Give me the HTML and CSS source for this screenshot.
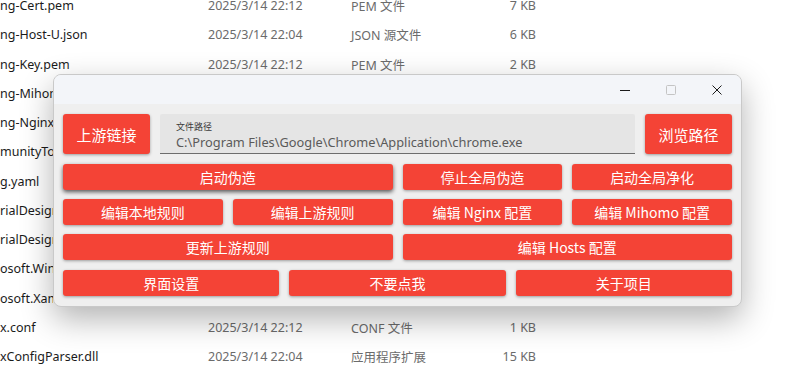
FILE: index.html
```html
<!DOCTYPE html>
<html lang="zh-CN">
<head>
    <meta charset="UTF-8">
    <meta name="viewport" content="width=device-width, initial-scale=1.0">
    <title>上游链接</title>
    <link rel="stylesheet" href="styles.css">
</head>
<body>
    <!-- file explorer list behind the dialog -->
    <div class="file-list">
        <div class="file-row"><span class="name">ng-Cert.pem</span><span class="date">2025/3/14 22:12</span><span class="type">PEM 文件</span><span class="size">7 KB</span></div>
        <div class="file-row"><span class="name">ng-Host-U.json</span><span class="date">2025/3/14 22:04</span><span class="type">JSON 源文件</span><span class="size">6 KB</span></div>
        <div class="file-row"><span class="name">ng-Key.pem</span><span class="date">2025/3/14 22:12</span><span class="type">PEM 文件</span><span class="size">2 KB</span></div>
        <div class="file-row hidden"><span class="name">ng-Mihomo.yaml</span></div>
        <div class="file-row hidden"><span class="name">ng-Nginx.conf</span></div>
        <div class="file-row hidden"><span class="name">munityToolkit.dll</span></div>
        <div class="file-row hidden"><span class="name">g.yaml</span></div>
        <div class="file-row hidden"><span class="name">rialDesignColors.dll</span></div>
        <div class="file-row hidden"><span class="name">rialDesignThemes.dll</span></div>
        <div class="file-row hidden"><span class="name">osoft.Windows.dll</span></div>
        <div class="file-row hidden"><span class="name">osoft.Xaml.dll</span></div>
        <div class="file-row"><span class="name">x.conf</span><span class="date">2025/3/14 22:12</span><span class="type">CONF 文件</span><span class="size">1 KB</span></div>
        <div class="file-row"><span class="name">xConfigParser.dll</span><span class="date">2025/3/14 22:04</span><span class="type">应用程序扩展</span><span class="size">15 KB</span></div>
    </div>

    <div class="window">
        <div class="title-bar">
            <span class="ctl">
                <svg width="10" height="10" viewBox="0 0 10 10"><path d="M0 5.5h10" stroke="#1a1a1a" stroke-width="1"/></svg>
            </span>
            <span class="ctl">
                <svg width="10" height="10" viewBox="0 0 10 10"><rect x="0.5" y="0.5" width="9" height="9" rx="1" fill="none" stroke="#c4c4c4" stroke-width="1"/></svg>
            </span>
            <span class="ctl">
                <svg width="10" height="10" viewBox="0 0 10 10"><path d="M0.5 0.5l9 9M9.5 0.5l-9 9" stroke="#1a1a1a" stroke-width="1"/></svg>
            </span>
        </div>

        <div class="content">
            <div class="path-row">
                <button class="btn btn-tall">上游链接</button>
                <div class="path-field">
                    <span class="path-label">文件路径</span>
                    <span class="path-value">C:\Program Files\Google\Chrome\Application\chrome.exe</span>
                </div>
                <button class="btn btn-tall">浏览路径</button>
            </div>

            <div class="grid-4">
                <button class="btn span-2 pressed">启动伪造</button>
                <button class="btn">停止全局伪造</button>
                <button class="btn">启动全局净化</button>

                <button class="btn">编辑本地规则</button>
                <button class="btn">编辑上游规则</button>
                <button class="btn">编辑 Nginx 配置</button>
                <button class="btn">编辑 Mihomo 配置</button>

                <button class="btn span-2">更新上游规则</button>
                <button class="btn span-2">编辑 Hosts 配置</button>
            </div>

            <div class="grid-3">
                <button class="btn">界面设置</button>
                <button class="btn">不要点我</button>
                <button class="btn">关于项目</button>
            </div>
        </div>
    </div>
</body>
</html>
```

FILE: styles.css
```css
body {
    margin: 0;
    background: #ffffff;
    font-family: "Noto Sans", "Noto Sans CJK SC", sans-serif;
    overflow: hidden;
}

/* background explorer list */
.file-list {
    margin-top: -9px;
}
.file-row {
    display: flex;
    align-items: center;
    height: 29.25px;
    font-size: 12.5px;
    white-space: nowrap;
}
.file-row .name {
    width: 208px;
    color: #1b1b1b;
}
/* rows mostly covered by the dialog */
.file-row.hidden .name {
    width: 53px;
    overflow: hidden;
}
.file-row .date {
    width: 143px;
    color: #6b6b6b;
}
.file-row .type {
    width: 120px;
    color: #6b6b6b;
}
.file-row .size {
    width: 65px;
    text-align: right;
    color: #6b6b6b;
}

/* dialog window */
.window {
    position: absolute;
    left: 53px;
    top: 74px;
    width: 687px;
    background: #efefef;
    border: 1px solid #c9c9c9;
    border-radius: 8px;
    box-shadow: 0 12px 32px rgba(0, 0, 0, 0.3);
    overflow: hidden;
}
.title-bar {
    height: 29px;
    background: #f3f5f9;
    display: flex;
    justify-content: flex-end;
    align-items: center;
    padding-right: 1px;
}
.ctl {
    width: 46px;
    display: flex;
    justify-content: center;
    align-items: center;
}
.content {
    padding: 10px 9px 10px 9px;
    display: flex;
    flex-direction: column;
    gap: 10px;
}

.btn {
    border: none;
    border-radius: 3px;
    background: #f44336;
    color: #ffffff;
    font-family: "Noto Sans CJK SC", sans-serif;
    font-size: 14px;
    height: 26px;
    padding: 0;
    box-shadow: 0 1px 3px rgba(0, 0, 0, 0.35);
}
.btn-tall {
    width: 87px;
    height: 40px;
    font-size: 15px;
}
.btn.pressed {
    box-shadow: 0 2px 4px rgba(0, 0, 0, 0.65);
}

.path-row {
    display: flex;
    gap: 10px;
}
.path-field {
    flex: 1;
    background: #e5e5e5;
    border-bottom: 1px solid #6d6d6d;
    border-radius: 2px 2px 0 0;
    display: flex;
    flex-direction: column;
    padding: 7px 0 0 16px;
    box-sizing: border-box;
    height: 40px;
}
.path-label {
    font-family: "Noto Sans CJK SC", sans-serif;
    font-size: 9px;
    line-height: 11px;
    color: #3a3a3a;
}
.path-value {
    font-size: 12.8px;
    line-height: 20px;
    color: #5a5a5a;
}

.grid-4 {
    display: grid;
    grid-template-columns: repeat(4, 1fr);
    gap: 9px 10px;
}
.span-2 {
    grid-column: span 2;
}
.grid-3 {
    display: grid;
    grid-template-columns: repeat(3, 1fr);
    gap: 10px;
}
```
